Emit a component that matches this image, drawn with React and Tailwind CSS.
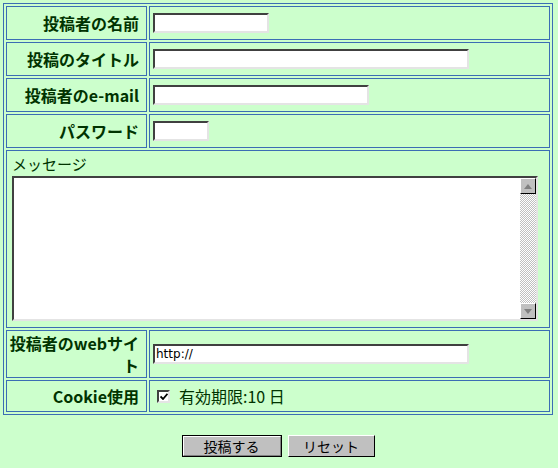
import React from "react";

const jp = { fontFamily: '"Noto Sans CJK JP", "Noto Sans", sans-serif' };

function Label({ children, lh = "leading-[19px]" }) {
  return (
    <div className={`border border-[#3b6db4] flex items-center justify-end pr-[7px] text-right font-bold text-[16px] ${lh} text-[#003300]`}>
      {children}
    </div>
  );
}

function Field({ w }) {
  return (
    <div className="border border-[#3b6db4] flex items-center pl-[3px]">
      <input
        type="text"
        className={`${w} h-[20px] bg-white border-2 border-t-[#404040] border-l-[#404040] border-b-[#e4e4e4] border-r-[#e4e4e4] outline-none`}
      />
    </div>
  );
}

function Row({ h, children }) {
  return <div className={`grid grid-cols-[141px_401px] gap-[2px] ${h}`}>{children}</div>;
}

export default function App() {
  return (
    <div className="w-[558px] h-[468px] bg-[#ccffcc] pt-[3px] pl-[3px]" style={jp}>
      <div className="w-[550px] border border-[#3b6db4] p-[2px] flex flex-col gap-[2px]">
        <Row h="h-[34px]">
          <Label>投稿者の名前</Label>
          <Field w="w-[116px]" />
        </Row>
        <Row h="h-[34px]">
          <Label>投稿のタイトル</Label>
          <Field w="w-[316px]" />
        </Row>
        <Row h="h-[34px]">
          <Label>投稿者のe-mail</Label>
          <Field w="w-[216px]" />
        </Row>
        <Row h="h-[34px]">
          <Label>パスワード</Label>
          <Field w="w-[56px]" />
        </Row>

        <div className="h-[178px] border border-[#3b6db4] pl-[5px] pt-[4px]">
          <div className="text-[15px] leading-[18px] text-[#003300]">メッセージ</div>
          <div className="mt-[3px] w-[526px] h-[145px] flex bg-white border-2 border-t-[#404040] border-l-[#404040] border-b-[#e4e4e4] border-r-[#e4e4e4]">
            <div className="flex-1" />
            <div className="w-[16px] flex flex-col bg-[repeating-conic-gradient(#c0c0c0_0_25%,#ffffff_0_50%)] bg-[length:2px_2px]">
              <div className="h-[16px] bg-[#c0c0c0] border border-t-white border-l-white border-b-black border-r-black flex items-center justify-center">
                <svg width="8" height="5" viewBox="0 0 8 5"><path d="M4 0 L8 5 L0 5 Z" fill="#808080" /></svg>
              </div>
              <div className="flex-1" />
              <div className="h-[16px] bg-[#c0c0c0] border border-t-white border-l-white border-b-black border-r-black flex items-center justify-center">
                <svg width="8" height="5" viewBox="0 0 8 5"><path d="M0 0 L8 0 L4 5 Z" fill="#808080" /></svg>
              </div>
            </div>
          </div>
        </div>

        <Row h="h-[48px]">
          <Label lh="leading-[22px]">
            <span>投稿者のwebサイ<br />ト</span>
          </Label>
          <div className="border border-[#3b6db4] flex items-center pl-[3px]">
            <div className="w-[316px] h-[20px] bg-white border-2 border-t-[#404040] border-l-[#404040] border-b-[#e4e4e4] border-r-[#e4e4e4] text-[12px] leading-[16px] pl-[1px] text-black" style={{ fontFamily: '"DejaVu Sans", sans-serif' }}>
              http://
            </div>
          </div>
        </Row>

        <Row h="h-[32px]">
          <Label>Cookie使用</Label>
          <div className="border border-[#3b6db4] flex items-center pl-[7px] gap-[9px] text-[16px] text-[#003300]">
            <span className="w-[13px] h-[13px] bg-white border-2 border-t-[#404040] border-l-[#404040] border-b-[#e4e4e4] border-r-[#e4e4e4] flex items-center justify-center">
              <svg width="8" height="7" viewBox="0 0 8 7"><path d="M0.5 3.5 L3 6 L7.5 0.8" stroke="#000" strokeWidth="1.8" fill="none" /></svg>
            </span>
            <span>有効期限:10 日</span>
          </div>
        </Row>
      </div>

      <div className="flex justify-center gap-[6px] mt-[20px] pr-[5px]">
        <button className="w-[100px] h-[22px] bg-[#c0c0c0] border border-black text-[14px] leading-[18px] text-black">
          <div className="h-full border border-t-white border-l-white border-b-[#808080] border-r-[#808080]">投稿する</div>
        </button>
        <button className="w-[87px] h-[22px] bg-[#c0c0c0] border border-t-white border-l-white border-b-black border-r-black text-[14px] leading-[18px] text-black">
          リセット
        </button>
      </div>
    </div>
  );
}
